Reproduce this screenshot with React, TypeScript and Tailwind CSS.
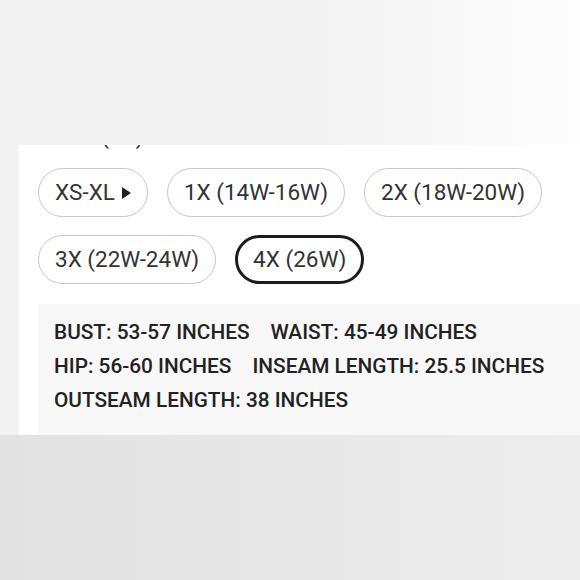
const SIZES = [
  ["XS-XL", "1X (14W-16W)", "2X (18W-20W)"],
  ["3X (22W-24W)", "4X (26W)"],
];

const MEASURES = [
  ["BUST: 53-57 INCHES", "WAIST: 45-49 INCHES"],
  ["HIP: 56-60 INCHES", "INSEAM LENGTH: 25.5 INCHES"],
  ["OUTSEAM LENGTH: 38 INCHES"],
];

function SizeChip({ label, selected }: { label: string; selected: boolean }) {
  return (
    <div
      className={
        selected
          ? "h-[49px] rounded-full border-[3px] border-[#1c1c1c] px-[15px] flex items-center"
          : "h-[49px] rounded-full border border-[#c6c6c6] px-[16px] flex items-center"
      }
    >
      <span className="text-[22.5px] leading-none text-[#333] whitespace-nowrap">{label}</span>
      {label === "XS-XL" && (
        <svg width="9" height="12" viewBox="0 0 9 12" className="ml-[7px]" aria-hidden>
          <polygon points="0,0 9,6 0,12" fill="#222" />
        </svg>
      )}
    </div>
  );
}

export default function App() {
  return (
    <div
      className="w-[580px] h-[580px] flex flex-col bg-gradient-to-r from-[#f3f3f3] via-[#f2f2f2] to-[#fdfdfd]"
      style={{ fontFamily: "Roboto, 'Liberation Sans', sans-serif" }}
    >
      <div className="h-[145px] shrink-0" />
      <div className="h-[290px] shrink-0 ml-[19px] bg-white flex flex-col">
        {/* title above is scrolled away, only the tips of the brackets show */}
        <div className="h-[4px] shrink-0 overflow-hidden pl-[35px]">
          <p className="text-[22.5px] leading-[23px] -mt-[20px] text-[#222]">Size (4X)</p>
        </div>
        <div className="pl-[19px] pt-[19px] flex flex-col gap-[18px]">
          {SIZES.map((row, i) => (
            <div key={i} className="flex gap-[19px]">
              {row.map((s) => (
                <SizeChip key={s} label={s} selected={s === "4X (26W)"} />
              ))}
            </div>
          ))}
        </div>
        <div className="mt-[20px] ml-[19px] flex-1 bg-[#f8f8f8] pl-[16px] pt-[16px] flex flex-col gap-[10px]">
          {MEASURES.map((row, i) => (
            <div key={i} className="flex gap-[21px]">
              {row.map((m) => (
                <span key={m} className="text-[20.8px] leading-[24px] font-medium text-[#222] whitespace-nowrap">
                  {m}
                </span>
              ))}
            </div>
          ))}
        </div>
      </div>
      <div className="flex-1 bg-gradient-to-r from-[#e2e2e2] to-[#ededed]" />
    </div>
  );
}
